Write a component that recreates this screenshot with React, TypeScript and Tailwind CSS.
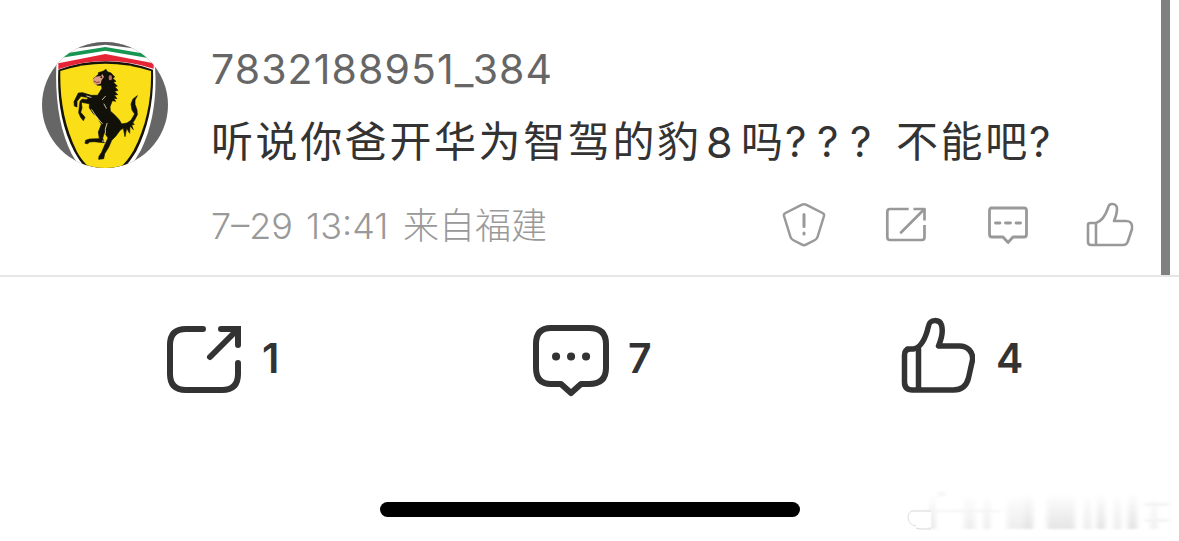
import type { ReactNode } from 'react';

function Avatar() {
  return (
    <svg viewBox="21 21 378 378" className="h-[126px] w-[126px] shrink-0 rounded-full">
      <rect x="21" y="21" width="378" height="378" fill="#666666" />
      {/* Shield */}
      <path d="M64 92 L70 60 L120 20 H305 L352 65 L360 95 C366 175 356 268 318 345 L285 400 H136 L110 357 C74 285 60 195 64 92Z" fill="#fff" />
      <path d="M70 104 Q211 54 354 104 C357 190 342 275 303 350 Q284 382 262 403 H156 Q132 377 118 350 C79 275 66 190 70 104Z" fill="#161408" />
      <path d="M76 108 Q211 64 348 108 C350 190 335 271 296 346 Q277 380 253 400 H166 Q140 377 126 350 C88 275 74 190 76 108Z" fill="#f9de18" />
      <path d="M70 85 L211 57 L356 85 V101 Q211 54 70 103Z" fill="#e52535" />
      <path d="M80 68 L211 47 L339 69 L330 56 L211 36 L94 55Z" fill="#169650" />
      <path d="M106 42 L211 29 L312 42 L300 21 L214 14 L117 21Z" fill="#5f5f5f" />
      {/* Horse */}
      <path
        d="M190 113 L204 109 L213 103 L217 110 L228 114 L239 126 L233 130 L243 139 L235 142 L247 153 L239 155 L249 166 L239 169 L248 179 L238 180 L246 191 L236 190 L242 199 L232 197 L225 215 L226 228 L240 241 L253 255 L260 267 L276 264 L288 256 L299 237 L291 225 L288 207 L294 192 L307 182 L300 195 L300 208 L306 225 L307 239 L300 253 L293 264 L298 268 L290 270 L295 284 L285 273 L284 295 L275 280 L270 305 L265 280 L256 285 L242 304 L230 316 L221 337 L209 356 L206 371 L191 373 L192 364 L200 352 L211 326 L219 309 L208 292 L203 310 L208 323 L177 320 L164 321 L158 326 L150 325 L152 316 L164 312 L193 311 L190 291 L199 268 L188 247 L175 236 L163 219 L163 206 L139 202 L141 219 L137 232 L150 247 L145 257 L137 247 L131 233 L135 199 L142 192 L155 194 L160 188 L138 184 L126 199 L126 216 L118 213 L117 200 L130 174 L143 173 L168 181 L188 181 L201 160 L199 151 L187 151 L177 142 L176 129 L190 124Z"
        fill="#11110a"
        stroke="#11110a"
        strokeWidth="2"
      />
      <path d="M181 126 Q189 121 202 117 L207 126 L200 135 L197 146 L185 149 L174 143 L173 133Z" fill="#df9d87" />
      <path d="M180 125 L188 119 L203 116 L198 123 Z" fill="#11110a" />
      <path d="M177 138 Q184 145 194 141" fill="none" stroke="#743d2d" strokeWidth="3" />
      <ellipse cx="226" cy="128" rx="5" ry="8" fill="#b47663" />
      <circle cx="199" cy="127" r="3" fill="#2b160b" />
      <path d="M211 184 L202 194 M170 224 Q184 248 202 266 M207 207 L214 220 M216 265 Q208 285 211 295 M155 183 L168 187 M202 318 L211 319" fill="none" stroke="#eee6bd" strokeWidth="2.5" strokeLinecap="round" />
    </svg>
  );
}

const THUMB_PATH =
  'M5 31 H11 C20 29 24 17 26 8 C27 1 37 1 39 7 C41 14 39 21 36 28 H57 C65 28 71 34 70 42 L66 60 Q63 72 51 72 H10 Q2 72 2 64 V37 Q2 31 8 31';

function Stat({ icon, children }: { icon: ReactNode; children: ReactNode }) {
  return (
    <div className="flex h-[90px] items-center text-[#333333]">
      {icon}
      <span className="font-['Inter',sans-serif] text-[41px] font-semibold leading-[50px]">{children}</span>
    </div>
  );
}

function SmallActions() {
  return (
    <div className="mt-px flex h-[54px] items-center text-[#999999]">
      <svg viewBox="0 0 44 48" className="h-[48px] w-[44px]" fill="none" stroke="currentColor" strokeWidth="2.5" strokeLinejoin="round" strokeLinecap="round">
        <path d="M20 3.7 Q22 2.7 24 3.7 L40.5 12 Q42.5 13 42 15 L35.5 36 Q35 38 33 39 L24 43.6 Q22 44.7 20 43.6 L11 39 Q9 38 8.500 36 L2 15 Q1.500 13 3.500 12Z" />
        <path d="M22 13.500 V25.500 M22 32 V33" strokeWidth="3" />
      </svg>
      <svg viewBox="0 0 44 48" className="ml-[58px] h-[48px] w-[44px]" fill="none" stroke="currentColor" strokeWidth="2.7" strokeLinecap="butt" strokeLinejoin="round">
        <path d="M24.700 8 H6 Q3.300 8 3.300 11 V36 Q3.300 39 6 39 H38 Q40.500 39 40.500 36 V24" />
        <path d="M29.500 8 H40.500 V19.500" />
        <path d="M40 8.500 L17 31.500" strokeLinecap="round" />
      </svg>
      <svg viewBox="0 0 44 48" className="ml-[58px] h-[48px] w-[44px]" fill="none" stroke="currentColor" strokeWidth="2.8" strokeLinecap="round" strokeLinejoin="round">
        <path d="M5 7 H38 Q40.500 7 40.500 9.500 V33.500 Q40.500 36 38 36 H27 L22 41.500 L17 36 H6 Q3.500 36 3.500 33.500 V9.500 Q3.500 7 6 7" />
        <path d="M9.500 22 H14 M19.500 22 H24.500 M30 22 H34.500" />
      </svg>
      <svg viewBox="0 0 50 48" className="ml-[54px] h-[48px] w-[50px]" fill="none" stroke="currentColor" strokeWidth="2.6" strokeLinecap="round" strokeLinejoin="round">
        <path d="M6 22 H12 C18 20 22 13 24 7 C25 1 33 2 33 8 Q33 13 30 20 H42 Q49 20 48 28 L44 40 Q43 44 39 44 H7 Q4 44 4 41 V24 Q4 22 6 22 M12 23 V43" />
      </svg>
    </div>
  );
}

function Watermark() {
  return (
    <svg viewBox="890 480 289 61" className="h-[61px] w-[289px]">
      <defs>
        <linearGradient id="mark-fade" x1="0" x2="0" y1="0" y2="1">
          <stop stopColor="#e2e2e2" stopOpacity="0" />
          <stop offset="1" stopColor="#e2e2e2" />
        </linearGradient>
        <filter id="mark-blur">
          <feGaussianBlur stdDeviation="2.4 0.8" />
        </filter>
      </defs>
      <g fill="url(#mark-fade)" filter="url(#mark-blur)">
        <rect x="964" y="493" width="11" height="36" opacity=".6" />
        <rect x="984" y="493" width="6" height="36" opacity=".7" />
        <rect x="1007" y="493" width="17" height="36" opacity=".6" />
        <rect x="1024" y="493" width="9" height="36" />
        <rect x="1047" y="493" width="28" height="36" opacity=".9" />
        <rect x="1084" y="493" width="7" height="36" opacity=".7" />
        <rect x="1097" y="493" width="8" height="36" />
        <rect x="1114" y="493" width="7" height="36" opacity=".7" />
        <rect x="1128" y="493" width="9" height="36" />
        <rect x="1151" y="493" width="6" height="36" opacity=".6" />
        <rect x="930" y="493" width="5" height="36" />
        <rect x="939" y="492" width="5" height="4" fill="#f0f0f0" />
        <rect x="910" y="510" width="90" height="2" fill="#f4f4f4" />
        <rect x="1145" y="503" width="24" height="3" fill="#f3f3f3" />
        <rect x="1145" y="519" width="24" height="3" fill="#f3f3f3" />
      </g>
      <path d="M911 512 H931 V527 H917 Q907 523 911 512" fill="#fff" />
      <path d="M931 511 H913 Q908 512 908 518 Q909 525 916 526" fill="none" stroke="#dddddd" strokeWidth="1" />
      <path d="M916 528 Q919 529 921 529 H931" fill="none" stroke="#d7d7d7" strokeWidth="1" />
    </svg>
  );
}

export default function App() {
  return (
    <main className="flex h-[541px] w-[1179px] flex-col overflow-hidden bg-white font-['Inter','Noto_Sans_CJK_SC',sans-serif]">
      <section className="flex h-[275px]">
        <div className="pl-[42px] pt-[42px]">
          <Avatar />
        </div>
        <div className="flex w-[966px] flex-col pl-[43px] pt-[44px]">
          <div className="h-[50px] whitespace-nowrap text-[41px] leading-[50px] tracking-[1.1px] text-[#666666]">7832188951_384</div>
          <p className="mt-[17px] flex h-[62px] whitespace-nowrap text-[42px] leading-[62px] text-[#333333]">
            <span className="w-[495px] tracking-[2.6px]">听说你爸开华为智驾的豹</span>
            <span className="w-[35px] text-[43px]">8</span>
            <span className="w-[44px]">吗</span>
            <span className="w-[32px]">?</span>
            <span className="w-[33px]">?</span>
            <span className="w-[46px]">?</span>
            <span className="w-[133px] tracking-[2.6px]">不能吧</span>
            <span>?</span>
          </p>
          <div className="mt-[24px] flex h-[54px] items-start justify-between">
            <div className="mt-[2px] flex whitespace-nowrap text-[36px] font-light leading-[54px] text-[#999999]">
              <span className="w-[95px]">7–29</span>
              <span className="w-[97px]">13:41</span>
              <span>来自福建</span>
            </div>
            <SmallActions />
          </div>
        </div>
        <div className="ml-[27px] w-[9px] bg-[#808080]" />
      </section>

      <div className="h-[2px] bg-[#e6e6e6]" />

      <nav className="flex h-[165px] items-start pl-[166px] pt-[36px]">
        <div className="w-[365px]">
          <Stat
            icon={
              <svg viewBox="0 0 76 76" className="mr-[20px] h-[76px] w-[76px]" fill="none" stroke="currentColor" strokeWidth="6" strokeLinecap="round" strokeLinejoin="miter">
                <path d="M37 9 H20 Q4 9 4 25 V54 Q4 70 20 70 H56 Q72 70 72 54 V43" />
                <path d="M55 9 H72 V25 M71 10 L44 37" />
              </svg>
            }
          >
            1
          </Stat>
        </div>
        <div className="w-[368px]">
          <Stat
            icon={
              <svg viewBox="0 0 80 78" className="mr-[17px] h-[78px] w-[80px]" fill="none" stroke="currentColor" strokeWidth="6" strokeLinecap="round" strokeLinejoin="round">
                <path d="M20 9 H58 Q75 9 75 25 V49 Q75 65 58 65 H50 L40 74 L30 65 H20 Q5 65 5 49 V25 Q5 9 20 9Z" />
                <path d="M25 37.500 H25.100 M40 37.500 H40.100 M55 37.500 H55.100" strokeWidth="8" />
              </svg>
            }
          >
            7
          </Stat>
        </div>
        <div>
          <Stat
            icon={
              <svg viewBox="-3.5 -2 76 78" className="mb-[7px] mr-[21px] h-[78px] w-[76px]" fill="none" stroke="currentColor" strokeWidth="5.500" strokeLinecap="round" strokeLinejoin="round">
                <path d={THUMB_PATH} />
                <path d="M16 31 V71" />
              </svg>
            }
          >
            4
          </Stat>
        </div>
      </nav>

      <footer className="flex h-[99px] pl-[380px]">
        <div className="mt-[60px] h-[15px] w-[420px] rounded-full bg-black" />
        <div className="ml-[90px] mt-[38px]">
          <Watermark />
        </div>
      </footer>
    </main>
  );
}
